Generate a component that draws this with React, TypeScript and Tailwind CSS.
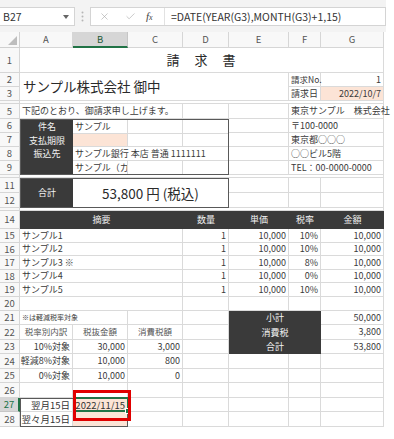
import type { ReactNode } from "react";
import { Check, X } from "lucide-react";

const g = "border-r border-b border-[#dadada]";
const dark = "bg-[#3a3a3a] text-[#f2f2f2]";
const peach = "bg-[#fce4d6]";

const rowHeads: [string, string][] = [
  ["1", "h-[25px]"],
  ["2", "h-[14px]"],
  ["3", "h-[14px]"],
  ["", "h-[3px]"],
  ["5", "h-[15px]"],
  ["6", "h-[14px]"],
  ["7", "h-[14px]"],
  ["8", "h-[14px]"],
  ["9", "h-[14px]"],
  ["", "h-[3px]"],
  ["11", "h-[15px]"],
  ["12", "h-[15px]"],
  ["", "h-[3px]"],
  ["14", "h-[18px]"],
  ["15", "h-[13.5px]"],
  ["16", "h-[13.5px]"],
  ["17", "h-[13.5px]"],
  ["18", "h-[13.5px]"],
  ["19", "h-[13.5px]"],
  ["20", "h-[14px]"],
  ["21", "h-[14.5px]"],
  ["22", "h-[14.5px]"],
  ["23", "h-[14.5px]"],
  ["24", "h-[14.5px]"],
  ["25", "h-[14.5px]"],
  ["26", "h-[14.5px]"],
  ["27", "h-[14.5px]"],
  ["28", "h-[14.5px]"],
];

const colHeads: [string, string][] = [
  ["A", "w-[53px]"],
  ["B", "w-[55px]"],
  ["C", "w-[55px]"],
  ["D", "w-[46px]"],
  ["E", "w-[60px]"],
  ["F", "w-[32px]"],
  ["G", "w-[63px]"],
];

const items: [string, string][] = [
  ["サンプル1", "10%"],
  ["サンプル2", "10%"],
  ["サンプル3 ※", "8%"],
  ["サンプル4", "0%"],
  ["サンプル5", "10%"],
];

function Cell({ className = "", children }: { className?: string; children?: ReactNode }) {
  return (
    <div className={`flex shrink-0 items-center whitespace-nowrap px-[2px] ${className}`}>{children}</div>
  );
}

function EFG({ e, f, gv }: { e?: ReactNode; f?: ReactNode; gv?: ReactNode }) {
  return (
    <>
      <Cell className={`w-[60px] ${g}`}>{e}</Cell>
      <Cell className={`w-[32px] ${g}`}>{f}</Cell>
      <Cell className={`w-[63px] justify-end ${g}`}>{gv}</Cell>
    </>
  );
}

function FormulaBar() {
  return (
    <div className="flex h-[32px] w-[386px] items-start bg-[#f3f3f3] pt-[7px]">
      <div className="flex h-[19px] w-[75px] items-center justify-between border border-l-0 border-[#d4d4d4] bg-white pl-[3px] pr-[5px]">
        <span className="text-[10.5px] text-[#333]">B27</span>
        <svg width="6" height="4" viewBox="0 0 6 4">
          <path d="M0 0h6L3 4z" fill="#666" />
        </svg>
      </div>
      <div className="flex w-[15px] justify-center pt-[4px]">
        <svg width="3" height="11" viewBox="0 0 3 11">
          <circle cx="1.5" cy="1.5" r="1" fill="#b5b5b5" />
          <circle cx="1.5" cy="5.5" r="1" fill="#b5b5b5" />
          <circle cx="1.5" cy="9.5" r="1" fill="#b5b5b5" />
        </svg>
      </div>
      <div className="flex h-[19px] flex-1 border border-[#d4d4d4] bg-white">
        <div className="flex w-[73px] items-center pl-[8px]">
          <X size={11} strokeWidth={1.3} color="#a6a6a6" />
          <Check size={11} strokeWidth={1.3} color="#a6a6a6" className="ml-[15px]" />
          <span className="ml-[10px] font-['Liberation_Serif',serif] text-[11px] italic text-[#444]">
            f<span className="text-[8px]">x</span>
          </span>
        </div>
        <div className="flex flex-1 items-center border-l border-[#e2e2e2] pl-[6px] text-[10.5px] text-[#333]">
          =DATE(YEAR(G3),MONTH(G3)+1,15)
        </div>
      </div>
    </div>
  );
}

function ColumnHeader() {
  return (
    <div className="flex h-[16px]">
      <div className="flex w-[20px] items-end justify-end border-r border-b border-[#d0d0d0] bg-[#f8f8f8] p-[2px]">
        <svg width="9" height="9" viewBox="0 0 9 9">
          <path d="M9 0V9H0z" fill="#bdbdbd" />
        </svg>
      </div>
      {colHeads.map(([l, w]) =>
        l === "B" ? (
          <div
            key={l}
            className={`${w} flex items-center justify-center border-r border-b-2 border-r-[#c6c6c6] border-b-[#217346] bg-[#d6d6d6] text-[9.5px] text-[#1e5a37]`}
          >
            {l}
          </div>
        ) : (
          <div
            key={l}
            className={`${w} flex items-center justify-center border-r border-b border-[#d6d6d6] bg-[#f8f8f8] text-[9.5px] text-[#555]`}
          >
            {l}
          </div>
        )
      )}
    </div>
  );
}

function RowHeader() {
  return (
    <div className="flex w-[20px] flex-col">
      {rowHeads.map(([n, h], i) =>
        n === "27" ? (
          <div
            key={i}
            className={`${h} flex items-center justify-center border-r-2 border-b border-r-[#217346] border-b-[#c6c6c6] bg-[#d6d6d6] text-[9.5px] text-[#217346]`}
          >
            {n}
          </div>
        ) : (
          <div
            key={i}
            className={`${h} flex items-center justify-center border-r border-b border-[#d6d6d6] bg-[#f8f8f8] text-[9.5px] text-[#555]`}
          >
            {n}
          </div>
        )
      )}
    </div>
  );
}

function Sheet() {
  return (
    <div className="relative w-[364px] text-[9px] text-[#3a3a3a]">
      {/* 1 */}
      <div className={`flex h-[25px] items-center justify-center ${g} text-[13px] tracking-[1px] text-[#2a2a2a]`}>
        請　求　書
      </div>

      {/* 2-3 */}
      <div className="flex h-[28px]">
        <div className={`flex w-[269px] items-center pl-[3px] text-[13.5px] text-[#2a2a2a] ${g}`}>
          サンプル株式会社 御中
        </div>
        <div className="flex w-[95px] flex-col">
          <div className="flex h-[14px]">
            <Cell className={`w-[32px] px-[1px] text-[8.5px] ${g}`}>請求No.</Cell>
            <Cell className={`w-[63px] justify-end ${g}`}>1</Cell>
          </div>
          <div className="flex h-[14px]">
            <Cell className={`w-[32px] px-[1px] ${g}`}>請求日</Cell>
            <Cell className={`w-[63px] justify-end ${peach} ${g}`}>2022/10/7</Cell>
          </div>
        </div>
      </div>

      {/* 4 hidden */}
      <div className={`h-[3px] ${g}`} />

      {/* 5 */}
      <div className="flex h-[15px]">
        <Cell className={`w-[163px] ${g}`}>下記のとおり、御請求申し上げます。</Cell>
        <Cell className={`w-[46px] ${g}`} />
        <Cell className={`w-[60px] ${g}`} />
        <Cell className={`w-[95px] ${g}`}>東京サンプル　株式会社</Cell>
      </div>

      {/* 6-9 */}
      <div className="flex h-[56px]">
        <div className="flex w-[209px] border border-[#595959]">
          <div className={`flex w-[52px] flex-col ${dark}`}>
            {["件名", "支払期限", "振込先", ""].map((t, i) => (
              <div key={i} className="flex h-[13.5px] items-center justify-center">
                {t}
              </div>
            ))}
          </div>
          <div className="flex flex-1 flex-col">
            <div className="flex h-[13.5px]">
              <Cell className={`w-[55px] ${g}`}>サンプル</Cell>
              <Cell className={`w-[55px] ${g}`} />
              <Cell className="flex-1 border-b border-[#dadada]" />
            </div>
            <div className="flex h-[13.5px]">
              <Cell className={`w-[55px] ${peach} ${g}`} />
              <Cell className={`w-[55px] ${g}`} />
              <Cell className="flex-1 border-b border-[#dadada]" />
            </div>
            <div className="flex h-[13.5px]">
              <Cell className="flex-1 border-b border-[#dadada]">サンプル銀行 本店 普通 1111111</Cell>
            </div>
            <div className="flex h-[13.5px]">
              <Cell className="w-[55px] overflow-hidden border-r border-[#dadada]">サンプル（カ</Cell>
              <Cell className="w-[55px] border-r border-[#dadada]" />
              <Cell className="flex-1" />
            </div>
          </div>
        </div>
        <div className="flex w-[60px] flex-col">
          {[0, 1, 2, 3].map((i) => (
            <div key={i} className={`h-[14px] ${g}`} />
          ))}
        </div>
        <div className="flex w-[95px] flex-col">
          {["〒100-0000", "東京都○○○", "○○ビル5階", "TEL：00-0000-0000"].map((t) => (
            <Cell key={t} className={`h-[14px] ${g}`}>
              {t}
            </Cell>
          ))}
        </div>
      </div>

      {/* 10 hidden */}
      <div className={`h-[3px] ${g}`} />

      {/* 11-12 */}
      <div className="flex h-[30px]">
        <div className="flex w-[209px] border border-[#595959]">
          <div className={`flex w-[52px] items-center justify-center ${dark}`}>合計</div>
          <div className="flex flex-1 items-center justify-center text-[13.5px] text-[#2a2a2a]">
            53,800 円 (税込)
          </div>
        </div>
        <div className="flex w-[155px] flex-col">
          <div className="flex h-[15px]">
            <EFG />
          </div>
          <div className="flex h-[15px]">
            <EFG />
          </div>
        </div>
      </div>

      {/* 13 hidden */}
      <div className={`h-[3px] ${g}`} />

      {/* 14 */}
      <div className={`flex h-[18px] ${dark}`}>
        <Cell className="w-[163px] justify-center">摘要</Cell>
        <Cell className="w-[46px] justify-center">数量</Cell>
        <Cell className="w-[60px] justify-center">単価</Cell>
        <Cell className="w-[32px] justify-center">税率</Cell>
        <Cell className="w-[63px] justify-center">金額</Cell>
      </div>

      {/* 15-19 */}
      {items.map(([name, rate]) => (
        <div key={name} className="flex h-[13.5px]">
          <Cell className={`w-[163px] ${g}`}>{name}</Cell>
          <Cell className={`w-[46px] justify-end ${g}`}>1</Cell>
          <Cell className={`w-[60px] justify-end ${g}`}>10,000</Cell>
          <Cell className={`w-[32px] justify-end ${g}`}>{rate}</Cell>
          <Cell className={`w-[63px] justify-end ${g}`}>10,000</Cell>
        </div>
      ))}

      {/* 20 */}
      <div className="flex h-[14px]">
        <Cell className={`w-[163px] ${g}`} />
        <Cell className={`w-[46px] ${g}`} />
        <EFG />
      </div>

      {/* 21-23 */}
      <div className="flex h-[14.5px]">
        <Cell className={`w-[108px] text-[7px] ${g}`}>※は軽減税率対象</Cell>
        <Cell className={`w-[55px] ${g}`} />
        <Cell className={`w-[46px] ${g}`} />
        <Cell className={`w-[92px] justify-center ${dark}`}>小計</Cell>
        <Cell className={`w-[63px] justify-end ${g}`}>50,000</Cell>
      </div>
      <div className="flex h-[14.5px]">
        <Cell className={`w-[53px] justify-center text-[8.5px] text-[#555] ${g}`}>税率別内訳</Cell>
        <Cell className={`w-[55px] justify-center text-[8.5px] text-[#555] ${g}`}>税抜金額</Cell>
        <Cell className={`w-[55px] justify-center text-[8.5px] text-[#555] ${g}`}>消費税額</Cell>
        <Cell className={`w-[46px] ${g}`} />
        <Cell className={`w-[92px] justify-center ${dark}`}>消費税</Cell>
        <Cell className={`w-[63px] justify-end ${g}`}>3,800</Cell>
      </div>
      <div className="flex h-[14.5px]">
        <Cell className={`w-[53px] justify-end ${g}`}>10%対象</Cell>
        <Cell className={`w-[55px] justify-end ${g}`}>30,000</Cell>
        <Cell className={`w-[55px] justify-end ${g}`}>3,000</Cell>
        <Cell className={`w-[46px] ${g}`} />
        <Cell className={`w-[92px] justify-center ${dark}`}>合計</Cell>
        <Cell className={`w-[63px] justify-end ${g}`}>53,800</Cell>
      </div>

      {/* 24-26 */}
      {[
        ["軽減8%対象", "10,000", "800"],
        ["0%対象", "10,000", "0"],
        ["", "", ""],
      ].map(([a, b, c], i) => (
        <div key={i} className="flex h-[14.5px]">
          <Cell className={`w-[53px] justify-end ${g}`}>{a}</Cell>
          <Cell className={`w-[55px] justify-end ${g}`}>{b}</Cell>
          <Cell className={`w-[55px] justify-end ${g}`}>{c}</Cell>
          <Cell className={`w-[46px] ${g}`} />
          <EFG />
        </div>
      ))}

      {/* 27-28 */}
      <div className="flex h-[29px]">
        <div className="flex w-[108px] border border-[#595959] text-[9.5px] text-[#333]">
          <div className="flex w-[52px] flex-col">
            <Cell className={`h-[13.5px] justify-end ${g}`}>翌月15日</Cell>
            <Cell className="h-[13.5px] justify-end border-r border-[#dadada] px-[1px]">翌々月15日</Cell>
          </div>
          <div className={`flex flex-1 flex-col ${peach}`}>
            <Cell className="h-[13.5px] justify-end">2022/11/15</Cell>
            <Cell className="h-[13.5px]" />
          </div>
        </div>
        <div className="flex w-[256px] flex-col">
          {[0, 1].map((i) => (
            <div key={i} className="flex h-[14.5px]">
              <Cell className={`w-[55px] ${g}`} />
              <Cell className={`w-[46px] ${g}`} />
              <EFG />
            </div>
          ))}
        </div>
      </div>

      {/* selection on B27 */}
      <div className="absolute left-[53px] top-[349px] h-[15px] w-[56px] border-2 border-[#217346]">
        <div className="absolute -bottom-[4px] -right-[4px] h-[6px] w-[6px] border border-white bg-[#217346]" />
      </div>
      {/* red highlight */}
      <div className="absolute left-[53px] top-[342px] h-[31px] w-[58px] border-[3px] border-[#e00000]" />
    </div>
  );
}

export default function App() {
  return (
    <div className="h-[439px] w-[394px] overflow-hidden bg-white font-['Noto_Sans_CJK_JP','Liberation_Sans',sans-serif]">
      <FormulaBar />
      <ColumnHeader />
      <div className="flex">
        <RowHeader />
        <Sheet />
      </div>
    </div>
  );
}
